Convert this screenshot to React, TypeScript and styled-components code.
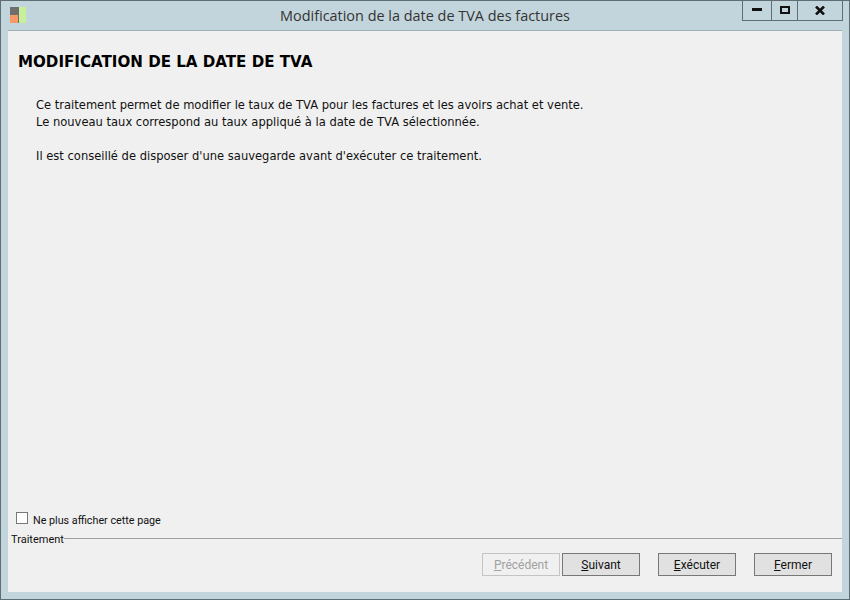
import React from "react";
import styled, { createGlobalStyle } from "styled-components";

const Global = createGlobalStyle`
  html, body { margin: 0; padding: 0; background: #c3d5dc; }
  #root { width: 850px; height: 600px; overflow: hidden; }
`;

const Win = styled.div`
  box-sizing: border-box;
  width: 850px;
  height: 600px;
  display: flex;
  flex-direction: column;
  background: #c3d5dc;
  border: 1px solid #5f6d75;
  font-family: "Roboto", sans-serif;
  color: #111;
`;

const TitleBar = styled.div`
  position: relative;
  height: 29px;
  flex: none;
  display: flex;
  align-items: center;
  justify-content: center;
`;

const Title = styled.div`
  font-family: "Open Sans", sans-serif;
  font-size: 14.45px;
  color: #333;
  margin-top: -1px;
`;

const AppIcon = styled.svg`
  position: absolute;
  left: 9px;
  top: 6px;
`;

const Controls = styled.div`
  position: absolute;
  right: 6px;
  top: -1px;
  display: flex;
  height: 21px;
  box-sizing: border-box;
  border: 1px solid #5f6d75;
  border-top: none;
`;

const Ctrl = styled.div<{ $w: number; $last?: boolean }>`
  width: ${(p) => p.$w}px;
  display: flex;
  align-items: center;
  justify-content: center;
  border-right: ${(p) => (p.$last ? "none" : "1px solid #5f6d75")};
`;

const Client = styled.div`
  flex: 1;
  margin: 0 7px 7px 7px;
  background: #f0f0f0;
  border-top: 1px solid #a0aeb5;
  display: flex;
  flex-direction: column;
  min-height: 0;
`;

const Body = styled.div`
  flex: 1;
  padding: 21px 10px 0 10px;
  min-height: 0;
`;

const Heading = styled.h1`
  margin: 0;
  font-family: "DejaVu Sans", sans-serif;
  font-size: 15.1px;
  line-height: 20px;
  font-weight: 700;
  color: #000;
`;

const Para = styled.p`
  margin: 25px 0 0 18px;
  font-family: "DejaVu Sans", sans-serif;
  font-size: 11.52px;
  line-height: 17px;
  white-space: pre-line;
  color: #111;
`;

const CheckRow = styled.label`
  display: flex;
  align-items: center;
  gap: 5px;
  margin: 0 0 4px 8px;
  font-size: 10.75px;
  line-height: 14px;
  height: 14px;
  color: #111;
`;

const Box = styled.span`
  box-sizing: border-box;
  width: 12px;
  height: 12px;
  background: #fff;
  border: 1px solid #777;
  margin-top: -7px;
`;

const Group = styled.div`
  display: flex;
  align-items: center;
  height: 13px;
  margin-left: 3px;
  font-size: 11px;
  color: #111;
`;

const GroupLabel = styled.span`
  margin-top: 2px;
`;

const GroupLine = styled.div`
  flex: 1;
  height: 1px;
  background: #a0a0a0;
  margin-top: -1px;
`;

const Footer = styled.div`
  height: 47px;
  display: flex;
  justify-content: flex-end;
  align-items: flex-start;
  padding: 8px 10px 0 0;
  box-sizing: border-box;
`;

const Btn = styled.div<{ $off?: boolean; $gap?: number }>`
  box-sizing: border-box;
  width: 78px;
  height: 23px;
  margin-left: ${(p) => p.$gap ?? 0}px;
  display: flex;
  align-items: center;
  justify-content: center;
  font-size: 12px;
  color: ${(p) => (p.$off ? "#a0a0a0" : "#111")};
  background: ${(p) => (p.$off ? "#f0f0f0" : "#e1e1e1")};
  border: 1px solid ${(p) => (p.$off ? "#c4c4c4" : "#777")};
`;

const Mn = styled.span`
  text-decoration: underline;
`;

export default function App() {
  return (
    <Win>
      <Global />
      <TitleBar>
        <AppIcon width="17" height="17" viewBox="0 0 17 17">
          <rect x="0" y="0" width="8" height="8" fill="#6e6e6e" />
          <rect x="0" y="8" width="8" height="8" fill="#f99a66" />
          <rect x="8" y="0" width="1" height="16" fill="#6e6e6e" />
          <rect x="9" y="0" width="7" height="16" fill="#c8f09a" />
        </AppIcon>
        <Title>Modification de la date de TVA des factures</Title>
        <Controls>
          <Ctrl $w={28}>
            <svg width="10" height="4" viewBox="0 0 10 4"><rect y="0" width="10" height="3" fill="#111" /></svg>
          </Ctrl>
          <Ctrl $w={25}>
            <svg width="10" height="8" viewBox="0 0 10 8"><rect x="1" y="1" width="8" height="6" fill="none" stroke="#111" strokeWidth="2" /></svg>
          </Ctrl>
          <Ctrl $w={44} $last>
            <svg width="10" height="9" viewBox="0 0 10 9"><path d="M1 0.5 L9 8.5 M9 0.5 L1 8.5" stroke="#111" strokeWidth="2.6" fill="none" /></svg>
          </Ctrl>
        </Controls>
      </TitleBar>
      <Client>
        <Body>
          <Heading>MODIFICATION DE LA DATE DE TVA</Heading>
          <Para>
            {"Ce traitement permet de modifier le taux de TVA pour les factures et les avoirs achat et vente.\nLe nouveau taux correspond au taux appliqué à la date de TVA sélectionnée.\n\nIl est conseillé de disposer d'une sauvegarde avant d'exécuter ce traitement."}
          </Para>
        </Body>
        <CheckRow>
          <Box />
          Ne plus afficher cette page
        </CheckRow>
        <Group>
          <GroupLabel>Traitement</GroupLabel>
          <GroupLine />
        </Group>
        <Footer>
          <Btn $off><span><Mn>P</Mn>récédent</span></Btn>
          <Btn $gap={2}><span><Mn>S</Mn>uivant</span></Btn>
          <Btn $gap={18}><span><Mn>E</Mn>xécuter</span></Btn>
          <Btn $gap={18}><span><Mn>F</Mn>ermer</span></Btn>
        </Footer>
      </Client>
    </Win>
  );
}
